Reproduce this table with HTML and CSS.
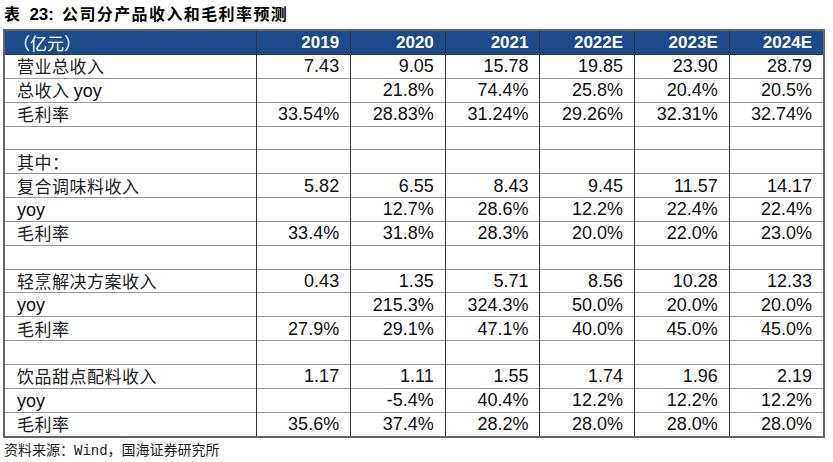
FILE: index.html
```html
<!DOCTYPE html>
<html lang="zh">
<head>
<meta charset="utf-8">
<link rel="stylesheet" href="styles.css">
</head>
<body>
<div class="title"><span class="cjk">表</span><span class="lat num">23:</span><span class="cjk">公司分产品收入和毛利率预测</span></div>
<table class="data">
  <colgroup><col class="c-label"><col><col><col><col><col><col></colgroup>
  <thead>
    <tr><th class="label">（亿元）</th><th>2019</th><th>2020</th><th>2021</th><th>2022E</th><th>2023E</th><th>2024E</th></tr>
  </thead>
  <tbody>
    <tr><td class="label">营业总收入</td><td>7.43</td><td>9.05</td><td>15.78</td><td>19.85</td><td>23.90</td><td>28.79</td></tr>
    <tr><td class="label">总收入 <span class="lat">yoy</span></td><td></td><td>21.8%</td><td>74.4%</td><td>25.8%</td><td>20.4%</td><td>20.5%</td></tr>
    <tr><td class="label">毛利率</td><td>33.54%</td><td>28.83%</td><td>31.24%</td><td>29.26%</td><td>32.31%</td><td>32.74%</td></tr>
    <tr><td class="label"></td><td></td><td></td><td></td><td></td><td></td><td></td></tr>
    <tr><td class="label">其中：</td><td></td><td></td><td></td><td></td><td></td><td></td></tr>
    <tr><td class="label">复合调味料收入</td><td>5.82</td><td>6.55</td><td>8.43</td><td>9.45</td><td>11.57</td><td>14.17</td></tr>
    <tr><td class="label"><span class="lat">yoy</span></td><td></td><td>12.7%</td><td>28.6%</td><td>12.2%</td><td>22.4%</td><td>22.4%</td></tr>
    <tr><td class="label">毛利率</td><td>33.4%</td><td>31.8%</td><td>28.3%</td><td>20.0%</td><td>22.0%</td><td>23.0%</td></tr>
    <tr><td class="label"></td><td></td><td></td><td></td><td></td><td></td><td></td></tr>
    <tr><td class="label">轻烹解决方案收入</td><td>0.43</td><td>1.35</td><td>5.71</td><td>8.56</td><td>10.28</td><td>12.33</td></tr>
    <tr><td class="label"><span class="lat">yoy</span></td><td></td><td>215.3%</td><td>324.3%</td><td>50.0%</td><td>20.0%</td><td>20.0%</td></tr>
    <tr><td class="label">毛利率</td><td>27.9%</td><td>29.1%</td><td>47.1%</td><td>40.0%</td><td>45.0%</td><td>45.0%</td></tr>
    <tr><td class="label"></td><td></td><td></td><td></td><td></td><td></td><td></td></tr>
    <tr><td class="label">饮品甜点配料收入</td><td>1.17</td><td>1.11</td><td>1.55</td><td>1.74</td><td>1.96</td><td>2.19</td></tr>
    <tr><td class="label"><span class="lat">yoy</span></td><td></td><td>-5.4%</td><td>40.4%</td><td>12.2%</td><td>12.2%</td><td>12.2%</td></tr>
    <tr><td class="label">毛利率</td><td>35.6%</td><td>37.4%</td><td>28.2%</td><td>28.0%</td><td>28.0%</td><td>28.0%</td></tr>
  </tbody>
</table>
<div class="source">资料来源：<span class="mono">Wind</span>，国海证券研究所</div>
</body>
</html>
```

FILE: styles.css
```css
html, body {
  margin: 0;
  padding: 0;
  background: #ffffff;
}

body {
  width: 833px;
  height: 462px;
  overflow: hidden;
  font-family: "Liberation Sans", Arial, "Noto Sans CJK SC", sans-serif;
  color: #111;
}

.title {
  height: 29px;
  line-height: 27px;
  padding-left: 4px;
  font-weight: bold;
  font-size: 16px;
  color: #000;
  white-space: nowrap;
}

.title .cjk {
  letter-spacing: 1.4px;
}

.title .num {
  margin: 0 8px 0 8px;
  font-size: 17px;
}

.cjk {
  font-family: "Noto Sans CJK SC", sans-serif;
}

.lat {
  font-family: "Liberation Sans", Arial, sans-serif;
}

.data {
  margin-left: 3px;
  width: 822px;
  border-collapse: collapse;
  table-layout: fixed;
  border: 2px solid #666;
}

.c-label {
  width: 252px;
}

.data th {
  height: 23px;
  padding: 0 11px 0 0;
  background: #1b4a8d;
  color: #fff;
  font-weight: bold;
  font-size: 17px;
  text-align: right;
  border-left: 1px solid #333;
  border-bottom: 1px solid #333;
  line-height: 18px;
}

.data th.label {
  text-align: left;
  padding-left: 8px;
  font-weight: normal;
  font-family: "Noto Sans CJK SC", sans-serif;
  font-size: 17px;
}

.data td {
  height: 22.85px;
  padding: 0 11px 0 0;
  font-size: 18px;
  line-height: 18px;
  text-align: right;
  vertical-align: middle;
  border-left: 1px solid #333;
  border-top: 1px solid #9a9a9a;
  white-space: nowrap;
}

.data td.label {
  text-align: left;
  padding-left: 12px;
  font-family: "Noto Sans CJK SC", sans-serif;
  font-size: 17px;
  letter-spacing: 0.5px;
  color: #222;
}

.data td.label .lat {
  font-size: 18px;
  letter-spacing: 0;
  color: #111;
}

.source {
  padding: 2px 0 0 4px;
  font-family: "Noto Sans CJK SC", sans-serif;
  font-size: 14px;
  line-height: 18px;
  color: #222;
  white-space: nowrap;
}

.mono {
  font-family: "Liberation Mono", monospace;
}
```
